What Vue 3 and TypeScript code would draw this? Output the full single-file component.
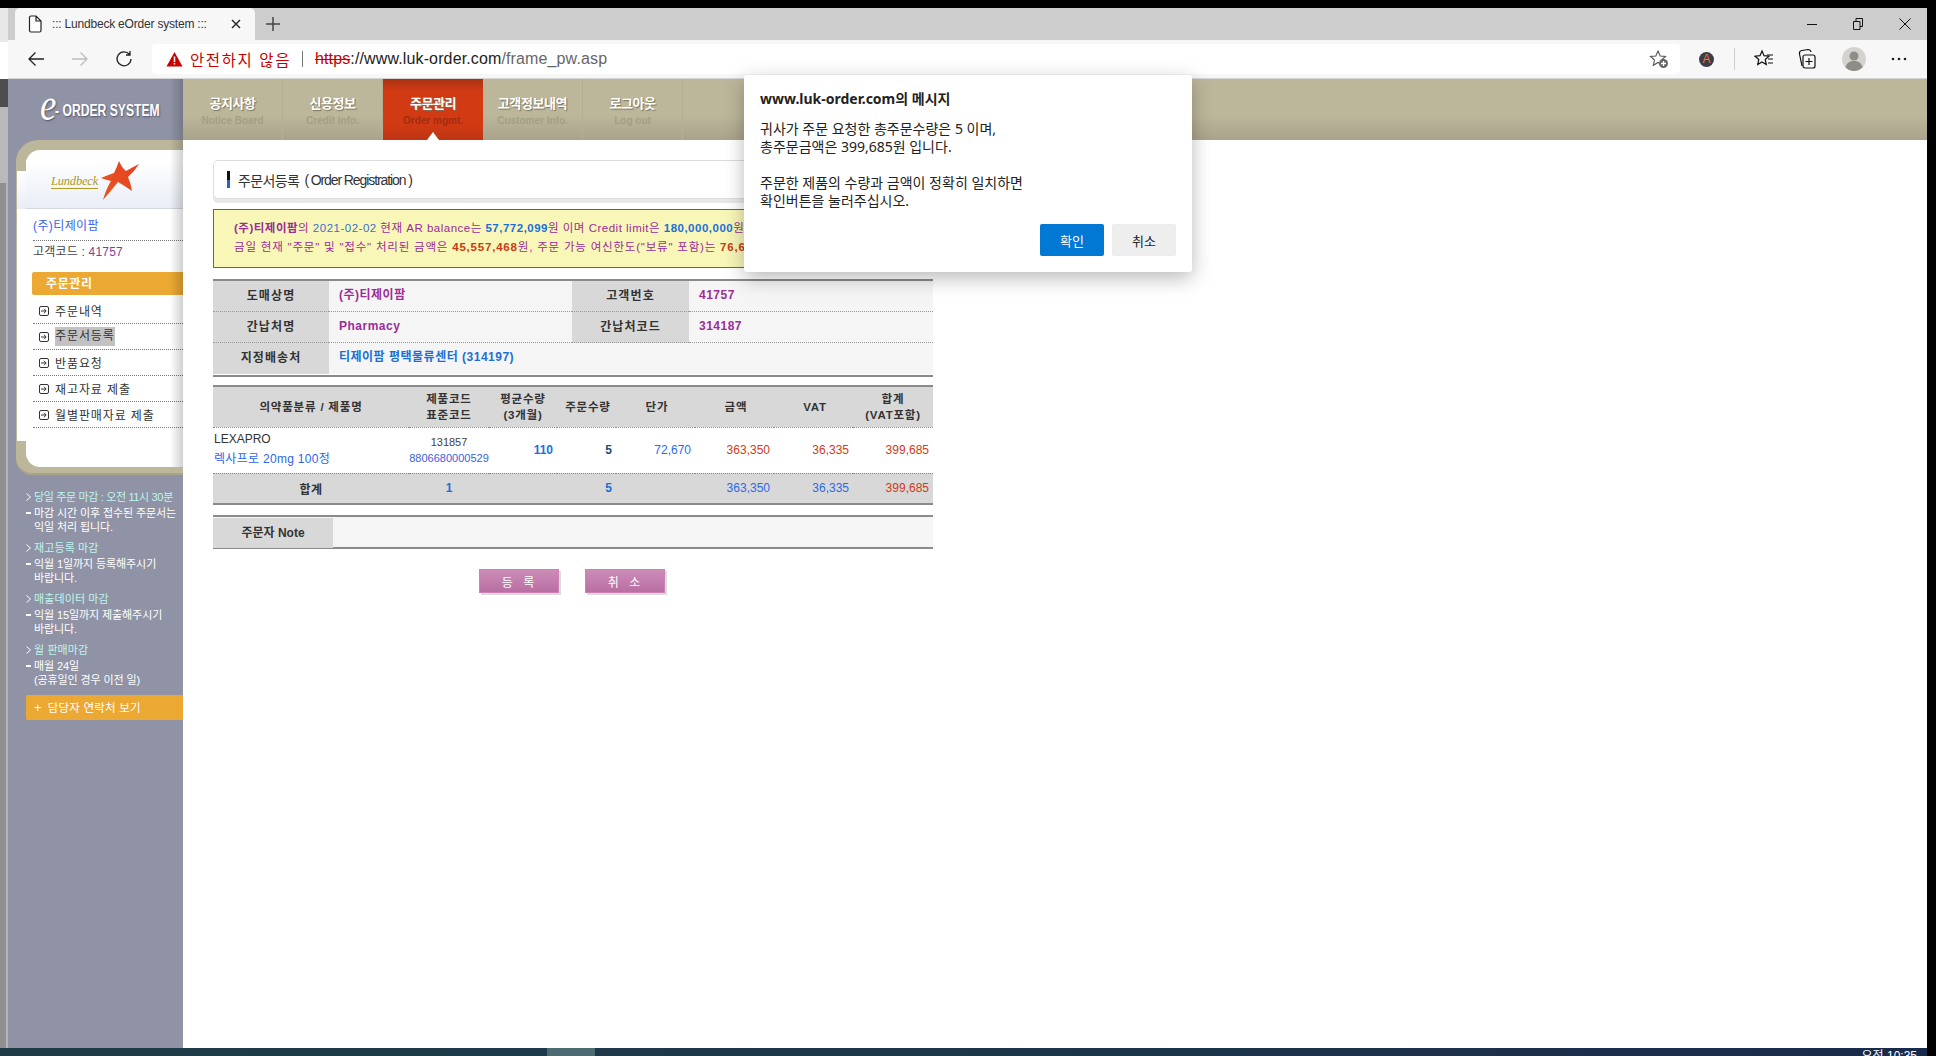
<script setup lang="ts">
interface NavItem { ko: string; en: string; active?: boolean }
const navItems: NavItem[] = [
  { ko: '공지사항', en: 'Notice Board' },
  { ko: '신용정보', en: 'Credit info.' },
  { ko: '주문관리', en: 'Order mgmt.', active: true },
  { ko: '고객정보내역', en: 'Customer Info.' },
  { ko: '로그아웃', en: 'Log out' },
]
const menu: { label: string; selected?: boolean }[] = [
  { label: '주문내역' },
  { label: '주문서등록', selected: true },
  { label: '반품요청' },
  { label: '재고자료 제출' },
  { label: '월별판매자료 제출' },
]
const notices: { title: string; lines: string[] }[] = [
  { title: '당일 주문 마감 : 오전 11시 30분', lines: ['마감 시간 이후 접수된 주문서는', '익일 처리 됩니다.'] },
  { title: '재고등록 마감', lines: ['익월 1일까지 등록해주시기', '바랍니다.'] },
  { title: '매출데이터 마감', lines: ['익월 15일까지 제출해주시기', '바랍니다.'] },
  { title: '월 판매마감', lines: ['매월 24일', '(공휴일인 경우 이전 일)'] },
]
</script>

<template>
  <div class="screen">
    <div class="black-top"></div>
    <div class="mid">
      <div class="strip">
        <div class="s1"></div><div class="s2"></div><div class="s3"></div><div class="s4"></div><div class="s5"></div>
      </div>
      <div class="browser">
        <div class="tabs">
          <div class="tab">
            <svg class="doc" width="14" height="18" viewBox="0 0 14 18"><path d="M1.5 2.5a1.5 1.5 0 0 1 1.5-1.5h5l5 5v9.500a1.500 1.500 0 0 1-1.500 1.500h-8.500a1.500 1.500 0 0 1-1.500-1.500zM8 1v5h5" fill="#fff" stroke="#222" stroke-width="1.200"/></svg>
            <span class="tab-title">::: Lundbeck eOrder system :::</span>
            <svg class="x" width="10" height="10" viewBox="0 0 10 10"><path d="M1 1l8 8M9 1l-8 8" stroke="#222" stroke-width="1.400"/></svg>
          </div>
          <svg class="plus" width="16" height="16" viewBox="0 0 16 16"><path d="M8 1v14M1 8h14" stroke="#444" stroke-width="1.500"/></svg>
          <div class="win">
            <svg width="12" height="12" viewBox="0 0 12 12"><path d="M1 6.500h10" stroke="#111"/></svg>
            <svg width="12" height="14" viewBox="0 0 12 14"><path d="M1.500 4.500h6.500v8h-6.500zM4 4.500v-3h6.500v8h-2.500" fill="none" stroke="#111"/></svg>
            <svg width="14" height="14" viewBox="0 0 14 14"><path d="M1.500 1.500l11 11M12.500 1.500l-11 11" stroke="#111"/></svg>
          </div>
        </div>
        <div class="toolbar">
          <svg class="tb back" width="18" height="18" viewBox="0 0 18 18"><path d="M17 9H2M8.500 2.500L2 9l6.500 6.500" fill="none" stroke="#222" stroke-width="1.300"/></svg>
          <svg class="tb fwd" width="18" height="18" viewBox="0 0 18 18"><path d="M1 9h15M9.500 2.500L16 9l-6.500 6.500" fill="none" stroke="#bdbdbd" stroke-width="1.300"/></svg>
          <svg class="tb reload" width="18" height="18" viewBox="0 0 18 18"><path d="M14.500 4.500A7 7 0 1 0 16 9M15 1v4h-4" fill="none" stroke="#222" stroke-width="1.300"/></svg>
          <div class="address">
            <svg class="warn" width="17" height="16" viewBox="0 0 17 16"><path d="M8.500 1L16.500 15.500H.5z" fill="#cb0000"/><path d="M8.500 5.500v5.500M8.500 12v1.500" stroke="#fff" stroke-width="1.500"/></svg>
            <span class="insecure">안전하지 않음</span>
            <span class="sep"></span>
            <span class="url"><span class="https">https</span>://www.luk-order.com<span class="path">/frame_pw.asp</span></span>
            <svg class="fav-add" width="20" height="20" viewBox="0 0 20 20"><path d="M9 2l2.200 5 5.300.5-4 3.500 1.200 5.300L9 13.500l-4.700 2.800 1.200-5.300-4-3.500 5.300-.5z" fill="none" stroke="#555" stroke-width="1.100"/><circle cx="14.500" cy="14.500" r="4.500" fill="#666"/><path d="M14.500 12v5M12 14.500h5" stroke="#fff" stroke-width="1.300"/></svg>
          </div>
          <div class="tools">
            <span class="ext">A</span>
            <span class="tsep"></span>
            <svg width="20" height="20" viewBox="0 0 20 20"><path d="M8 2l2 4.700 5 .5-3.800 3.300 1.100 5L8 13l-4.300 2.500 1.100-5L1 7.200l5-.5z" fill="none" stroke="#111" stroke-width="1.200"/><path d="M13 6h6M14 10h5M14 14h5" stroke="#111" stroke-width="1.200"/></svg>
            <svg width="20" height="22" viewBox="0 0 20 22"><path d="M5 18L2.500 6Q2 3 5 2.500L11 1.500Q13.500 1.500 14 4" fill="none" stroke="#111" stroke-width="1.200"/><rect x="6" y="7" width="12" height="13" rx="2" fill="#f7f7f7" stroke="#111" stroke-width="1.200"/><path d="M12 10v7M8.500 13.500h7" stroke="#111" stroke-width="1.200"/></svg>
            <svg width="24" height="24" viewBox="0 0 24 24"><circle cx="12" cy="12" r="12" fill="#d5d3cf"/><circle cx="12" cy="9" r="4.500" fill="#8f8d88"/><path d="M3.500 20.500c1-5 4.500-6.500 8.500-6.500s7.500 1.500 8.500 6.500A12 12 0 0 1 3.500 20.500z" fill="#8f8d88"/></svg>
            <svg width="16" height="4" viewBox="0 0 16 4"><circle cx="2" cy="2" r="1.300" fill="#222"/><circle cx="8" cy="2" r="1.300" fill="#222"/><circle cx="14" cy="2" r="1.300" fill="#222"/></svg>
          </div>
        </div>
        <div class="page">
          <aside class="side">
            <div class="brand"><span class="brand-e">e</span><span class="brand-t">- ORDER SYSTEM</span></div>
            <div class="panel">
              <div class="panel-inner">
                <div class="logo">
                  <span class="lund">Lundbeck</span>
                  <svg class="star" width="40" height="40" viewBox="0 0 40 40">
                    <defs><linearGradient id="sg" x1="0" y1="1" x2="1" y2="0"><stop offset="0" stop-color="#e8581c"/><stop offset="1" stop-color="#e53f26"/></linearGradient></defs>
                    <path d="M19 1Q22 8 26 11Q33 7 39 4Q34 12 28 17Q31 24 32 31Q25 26 18 22Q10 32 3 40Q6 29 11 21Q6 20 1 18Q8 15 14 13Q17 7 19 1z" fill="url(#sg)"/>
                  </svg>
                </div>
                <div class="cust-name">(주)티제이팜</div>
                <div class="cust-code">고객코드 : <b>41757</b></div>
                <div class="menu-head">주문관리</div>
                <ul class="menu">
                  <li v-for="m in menu" :key="m.label">
                    <svg width="10" height="10" viewBox="0 0 10 10"><rect x=".5" y=".5" width="9" height="9" rx="1.500" fill="none" stroke="#333"/><path d="M2 5h5M5 2.800L7.200 5 5 7.200" fill="none" stroke="#333"/></svg>
                    <span :class="{ sel: m.selected }">{{ m.label }}</span>
                  </li>
                </ul>
              </div>
            </div>
            <div class="notices">
              <div v-for="(n, i) in notices" :key="n.title" class="notice">
                <div class="n-title" :class="{ tight: i === 0 }">
                  <svg width="5" height="8" viewBox="0 0 5 8"><path d="M.5.5L4.500 4 .5 7.500" fill="none" stroke="#fff"/></svg>
                  <span>{{ n.title }}</span>
                </div>
                <div class="n-body"><i class="dash"></i><div><div v-for="l in n.lines" :key="l">{{ l }}</div></div></div>
              </div>
            </div>
            <div class="contact"><span class="cplus">+</span>담당자 연락처 보기</div>
          </aside>
          <div class="main">
            <nav class="nav">
              <div v-for="n in navItems" :key="n.ko" class="nav-item" :class="{ active: n.active }">
                <div class="nk">{{ n.ko }}</div>
                <div class="ne">{{ n.en }}</div>
              </div>
            </nav>
            <div class="content">
              <div class="title-box"><i class="mark"></i><span class="t-ko">주문서등록</span><span class="t-en">( Order Registration )</span></div>
              <div class="yellow">
                <div class="yl"><b class="pu">(주)티제이팜</b><span class="pu">의 </span><span class="bl2">2021-02-02</span><span class="pu"> 현재 AR balance는 </span><b class="bl">57,772,099</b><span class="pu">원 이며 Credit limit은 </span><b class="bl">180,000,000</b><span class="pu">원 입니다.</span></div>
                <div class="yl"><span class="pu">금일 현재 "주문" 및 "접수" 처리된 금액은 </span><b class="rd">45,557,468</b><span class="pu">원, 주문 가능 여신한도("보류" 포함)는 </span><b class="rd">76,670,433</b><span class="pu">원 입니다.</span></div>
              </div>
              <div class="info">
                <div class="lab">도매상명</div><div class="val pu">(주)티제이팜</div><div class="lab">고객번호</div><div class="val pu">41757</div>
                <div class="lab">간납처명</div><div class="val pu">Pharmacy</div><div class="lab">간납처코드</div><div class="val pu">314187</div>
                <div class="lab last">지정배송처</div><div class="val last wide blv">티제이팜 평택물류센터 (314197)</div>
              </div>
              <table class="order">
                <colgroup><col class="c1"><col class="c2"><col class="c3"><col class="c4"><col class="c5"><col class="c5"><col class="c5"><col class="c2"></colgroup>
                <thead>
                  <tr>
                    <th>의약품분류 / 제품명</th>
                    <th>제품코드<br>표준코드</th>
                    <th>평균수량<br>(3개월)</th>
                    <th class="sh">주문수량</th>
                    <th class="sh">단가</th>
                    <th class="sh">금액</th>
                    <th class="sh">VAT</th>
                    <th>합계<br>(VAT포함)</th>
                  </tr>
                </thead>
                <tbody>
                  <tr class="item">
                    <td class="prod"><div>LEXAPRO</div><div class="pname">렉사프로 20mg 100정</div></td>
                    <td class="code"><div>131857</div><div class="std">8806680000529</div></td>
                    <td class="num bb">110</td>
                    <td class="num bd">5</td>
                    <td class="num blue">72,670</td>
                    <td class="num red">363,350</td>
                    <td class="num red">36,335</td>
                    <td class="num red">399,685</td>
                  </tr>
                  <tr class="sum">
                    <td class="sum-l">합계</td>
                    <td class="sum-c">1</td>
                    <td></td>
                    <td class="num bb">5</td>
                    <td></td>
                    <td class="num blue">363,350</td>
                    <td class="num blue">36,335</td>
                    <td class="num red">399,685</td>
                  </tr>
                </tbody>
              </table>
              <div class="note"><div class="note-l">주문자 Note</div><div class="note-v"></div></div>
              <div class="btns"><button class="pbtn">등 록</button><button class="pbtn">취 소</button></div>
            </div>
          </div>
        </div>
      </div>
      <div class="black-right"></div>
    </div>
    <div class="taskbar"><span class="task-seg"></span><span class="clock">오전 10:35</span></div>

    <div class="dialog">
      <div class="d-title">www.luk-order.com의 메시지</div>
      <div class="d-body">
        <div>귀사가 주문 요청한 총주문수량은 5 이며,</div>
        <div>총주문금액은 399,685원 입니다.</div>
        <div>&nbsp;</div>
        <div>주문한 제품의 수량과 금액이 정확히 일치하면</div>
        <div>확인버튼을 눌러주십시오.</div>
      </div>
      <div class="d-btns"><button class="ok">확인</button><button class="cancel">취소</button></div>
    </div>
  </div>
</template>

<style>
html, body { margin: 0; background: #000; overflow: hidden; }
</style>

<style scoped>
* { box-sizing: border-box; }
.screen { position: relative; width: 1936px; height: 1056px; background: #000; overflow: hidden; display: flex; flex-direction: column; font-family: "Liberation Sans", "Noto Sans CJK KR", sans-serif; font-size: 12px; color: #333; }
.black-top { height: 8px; flex: none; }
.mid { flex: none; height: 1040px; display: flex; }
.strip { width: 8px; flex: none; display: flex; flex-direction: column; }
.s1 { height: 34px; background: #e8e8e8; }
.s2 { height: 37px; background: #fff; }
.s3 { height: 28px; background: #4d4d4d; }
.s4 { height: 76px; background: #b9b9b9; }
.s5 { flex: 1; background: #8f8f8f; border-right: 2px solid #b4b4b4; }
.browser { width: 1919px; flex: none; display: flex; flex-direction: column; background: #fff; }
.black-right { flex: 1; }
.tabs { height: 32px; flex: none; background: #cdcdcd; display: flex; align-items: center; position: relative; padding-left: 7px; }
.tab { width: 240px; height: 32px; background: #f7f7f7; border-radius: 5px 5px 0 0; display: flex; align-items: center; padding: 0 14px 0 13px; }
.doc { margin-right: 10px; }
.tab-title { flex: 1; font-family: "Liberation Sans", sans-serif; font-size: 12px; color: #333; white-space: nowrap; letter-spacing: -.2px; }
.plus { margin-left: 10px; }
.win { margin-left: auto; display: flex; align-items: center; gap: 34px; padding-right: 15px; }
.toolbar { height: 39px; flex: none; background: #f7f7f7; border-bottom: 1px solid #d5d5d5; display: flex; align-items: center; padding-left: 19px; }
.tb { flex: none; }
.back { margin-right: 26px; }
.fwd { margin-right: 26px; }
.reload { margin-right: 19px; }
.address { width: 1528px; height: 30px; margin-top: -1px; background: #fff; border-radius: 4px; display: flex; align-items: center; padding-left: 14px; flex: none; }
.warn { margin-right: 7px; }
.insecure { color: #c80000; font-size: 15.500px; width: 100px; white-space: nowrap; letter-spacing: 1.600px; }
.sep { width: 1px; height: 16px; background: #777; margin: 0 12px 0 12px; }
.url { font-size: 16px; color: #222; white-space: nowrap; font-family: "Liberation Sans", sans-serif; letter-spacing: .13px; }
.https { color: #c80000; text-decoration: line-through; }
.path { color: #666; }
.fav-add { margin-left: auto; margin-right: 11px; }
.tools { display: flex; align-items: center; flex: none; margin-left: 19px; gap: 0; }
.ext { width: 15px; height: 15px; border-radius: 50%; background: #3c3c4a; color: #e8782a; font-size: 12px; display: flex; align-items: center; justify-content: center; margin-right: 20px; }
.tsep { width: 1px; height: 22px; background: #d0d0d0; margin-right: 19px; }
.tools svg:nth-of-type(1) { margin-right: 23px; }
.tools svg:nth-of-type(2) { margin-right: 25px; }
.tools svg:nth-of-type(3) { margin-right: 25px; }
.page { flex: 1; display: flex; min-height: 0; }
.side { width: 175px; flex: none; background: #8f93a5; position: relative; }
.side::after { content: ""; position: absolute; right: 0; top: 0; width: 13px; height: 388px; background: linear-gradient(to right, rgba(0,0,0,0), rgba(0,0,0,.18)); }
.brand { height: 61px; padding: 4px 0 0 32px; display: flex; align-items: center; color: #fff; text-shadow: 1px 1px 2px rgba(40,40,60,.6); }
.brand-e { display: inline-block; font-family: "Liberation Serif", serif; font-style: italic; font-size: 46px; line-height: 30px; margin-top: -14px; transform: scaleX(.8); transform-origin: left; width: 17px; }
.brand-t { font-family: "Liberation Sans", sans-serif; font-size: 16px; font-weight: 700; white-space: nowrap; margin-left: -2px; margin-top: -2px; transform: scaleX(.76); transform-origin: left; }
.panel { margin-left: 8px; height: 335px; background: #bcb79b; border-radius: 22px 0 0 16px; padding-top: 10px; position: relative; box-shadow: inset 0 -2px 0 #a8a38a; }
.panel::before { content: ""; position: absolute; left: 1px; top: 31px; width: 12px; height: 270px; background: linear-gradient(#fff 0, #e9edf6 37px, #d5d8e0 37px, #fff 38px); }
.panel-inner { position: relative; margin-left: 10px; height: 317px; background: #fff; border-radius: 14px 0 0 14px; padding-top: 10px; }
.logo { height: 49px; background: linear-gradient(#fff, #e9edf6); border-bottom: 1px solid #d5d8e0; position: relative; }
.lund { position: absolute; left: 25px; top: 15px; font-family: "Liberation Serif", serif; font-style: italic; font-size: 12.500px; color: #b09a26; border-bottom: 1px solid #b09a26; line-height: 13px; letter-spacing: -.2px; }
.star { position: absolute; left: 74px; top: 0; }
.cust-name { margin-left: 7px; height: 32px; line-height: 34px; border-bottom: 1px dotted #777; color: #3a62f0; letter-spacing: .4px; white-space: nowrap; }
.cust-code { margin-left: 7px; height: 31px; padding-top: 3px; line-height: 16px; color: #444; white-space: nowrap; letter-spacing: .2px; }
.cust-code b { font-weight: 400; color: #8a3a9a; font-size: 12px; }
.menu-head { margin-left: 6px; height: 23px; line-height: 24px; background: #eba832; border-radius: 2px 0 0 2px; color: #fff; font-weight: 700; padding-left: 14px; letter-spacing: .6px; }
.menu { list-style: none; margin: 3px 0 0 7px; padding: 0; }
.menu li { height: 26px; border-bottom: 1px dotted #777; display: flex; align-items: center; padding-left: 6px; gap: 6px; white-space: nowrap; letter-spacing: .9px; color: #333; }
.menu .sel { background: #c2c2c2; height: 19px; line-height: 19px; letter-spacing: .9px; }
.notices { padding: 15px 0 0 18px; color: #fff; position: relative; }
.notice { margin-bottom: 7px; }
.n-title { display: flex; align-items: center; gap: 3px; color: #bff5ef; height: 14px; line-height: 14px; white-space: nowrap; font-size: 11px; letter-spacing: .1px; }
.n-title.tight { letter-spacing: -.35px; }
.n-body { display: flex; gap: 3px; line-height: 14px; margin-top: 2px; font-size: 11px; white-space: nowrap; color: #fff; letter-spacing: -.1px; }
.dash { width: 5px; height: 2px; background: #fff; margin-top: 6px; flex: none; }
.contact { margin: 8px 0 0 18px; height: 25px; background: #eba832; border-radius: 2px 0 0 2px; color: #fff; line-height: 25px; padding-left: 8px; font-size: 11.500px; letter-spacing: .2px; white-space: nowrap; }
.cplus { margin-right: 6px; font-size: 13px; }
.main { flex: 1; display: flex; flex-direction: column; min-width: 0; }
.nav { height: 61px; flex: none; display: flex; background: linear-gradient(#bcb79b 0, #bcb79b 60%, #a8a38a 100%); }
.nav-item { width: 100px; height: 61px; text-align: center; padding-top: 16px; border-right: 1px solid #b4af93; position: relative; }
.nk { color: #fff; font-weight: 700; font-size: 13px; line-height: 18px; letter-spacing: -.4px; text-shadow: 1px 1px 1px #77735c; white-space: nowrap; }
.ne { color: #a3a086; font-weight: 700; font-size: 10px; line-height: 14px; margin-top: 1px; white-space: nowrap; }
.nav-item.active { background: linear-gradient(#a93213 0, #d13a13 20%, #d13a13 75%, #bd3513 100%); border-right: 0; }
.nav-item.active .ne { color: #a02d10; }
.nav-item.active::after { content: ""; position: absolute; left: 44px; bottom: 0; border: 6px solid transparent; border-top: 0; border-bottom: 8px solid #fff; }
.content { width: 780px; padding: 20px 30px 0; flex: none; }
.title-box { height: 39px; background: #fff; border: 1px solid #ddd; border-radius: 5px; box-shadow: 0 4px 0 #e8e8e8; display: flex; align-items: center; padding-left: 13px; margin-bottom: 10px; }
.mark { width: 3px; height: 17px; background: linear-gradient(#111 50%, #2464c8 50%); margin-right: 8px; flex: none; }
.t-ko { font-size: 14px; color: #333; margin-right: 5px; letter-spacing: -.6px; }
.t-en { font-size: 14px; color: #333; letter-spacing: -1.100px; }
.yellow { height: 59px; background: #f8f7b8; border: 1px solid #666; padding: 9px 0 0 20px; overflow: hidden; font-size: 11.500px; line-height: 19px; white-space: nowrap; margin-bottom: 11px; }
.yl { letter-spacing: .5px; }
.yl + .yl { letter-spacing: .8px; }
.pu { color: #9b2d96; }
.bl { color: #1a6fd8; }
.bl2 { color: #3a6fd0; }
.rd { color: #c83a10; }
.info { display: grid; grid-template-columns: 116px 243px 117px 244px; border-top: 2px solid #8a8a8a; border-bottom: 2px solid #8a8a8a; padding-bottom: 1px; }
.lab { height: 31px; background: #d8d8d8; border-bottom: 1px dotted #999; text-align: center; line-height: 30px; font-weight: 700; font-size: 12px; color: #333; letter-spacing: 1.100px; white-space: nowrap; }
.val { height: 31px; background: #f5f5f5; border-bottom: 1px dotted #999; padding-left: 10px; line-height: 29px; font-weight: 700; font-size: 12px; letter-spacing: .5px; white-space: nowrap; }
.last { border-bottom: 0; }
.wide { grid-column: span 3; }
.blv { color: #1a6fd8; }
.order { width: 720px; table-layout: fixed; border-collapse: collapse; margin-top: 8px; border-top: 2px solid #8a8a8a; border-bottom: 2px solid #8a8a8a; }
.c1 { width: 196px; } .c2 { width: 80px; } .c3 { width: 68px; } .c4 { width: 59px; } .c5 { width: 79px; }
.order th { background: #d8d8d8; height: 41px; padding: 0; border-bottom: 1px dotted #888; font-size: 11.500px; line-height: 16px; color: #333; letter-spacing: .8px; white-space: nowrap; }
.order th.sh { padding-left: 3px; }
.order tr.item td { height: 46px; border-bottom: 1px dotted #888; background: #fff; padding: 0; }
.order tr.item td.prod { padding: 0 0 2px 1px; font-size: 12px; line-height: 20px; color: #333; white-space: nowrap; }
.pname { color: #2a66ea; letter-spacing: .3px; }
.code { text-align: center; font-size: 11px; line-height: 16px; color: #444; }
.std { color: #3a62d8; }
.order tr td.num, .order tr.item td.num { text-align: right; padding: 0 4px 0 0; font-size: 12px; white-space: nowrap; }
.bb { color: #1a6fd8; font-weight: 700; }
.bd { color: #1d4a80; font-weight: 700; }
.blue { color: #2a6ae8; }
.red { color: #d03a18; }
.sum td { background: #d8d8d8; height: 31px; border-bottom: 1px solid #fff; padding: 0; }
.sum-l { text-align: center; font-weight: 700; font-size: 12px; letter-spacing: .5px; }
.sum-c { text-align: center; font-weight: 700; color: #1a6fd8; }
.note { display: flex; margin-top: 10px; height: 34px; border-top: 2px solid #8a8a8a; border-bottom: 2px solid #8a8a8a; background: #f5f5f5; padding-top: 1px; }
.note-l { width: 120px; background: #d8d8d8; height: 30px; line-height: 30px; text-align: center; font-weight: 700; font-size: 12px; color: #333; }
.note-v { flex: 1; }
.btns { display: flex; margin: 20px 0 0 266px; gap: 26px; }
.pbtn { width: 80px; height: 24px; border: 1px solid #d080b8; background: linear-gradient(#cd8cb8, #b86fa2); color: #fff; font-family: inherit; font-size: 12px; letter-spacing: 2px; word-spacing: 3px; box-shadow: 2px 2px 0 #dcdcdc; padding: 0; }
.taskbar { flex: none; height: 8px; width: 1927px; background: linear-gradient(to right, #1f3c46, #1c3448 60%, #1a2a4a); position: relative; overflow: hidden; }
.task-seg { position: absolute; left: 547px; top: 0; width: 48px; height: 8px; background: #4c6a72; }
.clock { position: absolute; right: 10px; top: 1px; color: #fff; font-size: 12px; line-height: 14px; white-space: nowrap; }
.dialog { position: absolute; left: 744px; top: 75px; width: 448px; height: 197px; background: #fff; border-radius: 3px; box-shadow: 0 6px 20px rgba(0,0,0,.28); padding: 15px 16px 0; font-family: "Noto Sans", "Noto Sans CJK KR", sans-serif; color: #222; }
.d-title { font-weight: 700; font-size: 14px; line-height: 18px; color: #222; }
.d-body { margin-top: 12px; font-size: 14px; line-height: 18px; }
.d-btns { position: absolute; right: 16px; top: 149px; display: flex; gap: 8px; }
.d-btns button { width: 64px; height: 32px; border: 0; border-radius: 2px; font-family: inherit; font-size: 13px; padding: 0; }
.ok { background: #0078d4; color: #fff; }
.cancel { background: #eee; color: #222; }
</style>
